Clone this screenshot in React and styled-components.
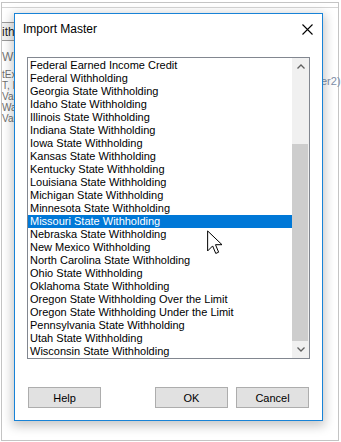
import React from "react"
import styled, { createGlobalStyle } from "styled-components"

const items = [
  "Federal Earned Income Credit",
  "Federal Withholding",
  "Georgia State Withholding",
  "Idaho State Withholding",
  "Illinois State Withholding",
  "Indiana State Withholding",
  "Iowa State Withholding",
  "Kansas State Withholding",
  "Kentucky State Withholding",
  "Louisiana State Withholding",
  "Michigan State Withholding",
  "Minnesota State Withholding",
  "Missouri State Withholding",
  "Nebraska State Withholding",
  "New Mexico Withholding",
  "North Carolina State Withholding",
  "Ohio State Withholding",
  "Oklahoma State Withholding",
  "Oregon State Withholding Over the Limit",
  "Oregon State Withholding Under the Limit",
  "Pennsylvania State Withholding",
  "Utah State Withholding",
  "Wisconsin State Withholding"
]

const selected = "Missouri State Withholding"

const Chevron = ({ down }) => (
  <svg width="8" height="5" viewBox="0 0 8 5">
    <polyline
      points={down ? "0.5,0.5 4,4 7.5,0.5" : "0.5,4.5 4,1 7.5,4.5"}
      fill="none"
      stroke="#606060"
      strokeWidth="1.3"
    />
  </svg>
)

class App extends React.Component {
  render() {
    return (
      <Backdrop>
        <GlobalStyle />
        <Frame>
          <TopStrip />
          <Body>
            <LeftCol>
              <FieldBox>
                <span>ith</span>
              </FieldBox>
              <Label>With</Label>
              <Lines>
                <div>tExt</div>
                <div>T, I</div>
                <div>Var.</div>
                <div>Wag</div>
                <div>Var.</div>
              </Lines>
            </LeftCol>
            <RightCol>er2)</RightCol>
          </Body>
        </Frame>

        <Dialog>
          <TitleBar>
            <Title>Import Master</Title>
            <CloseButton>
              <svg width="11" height="11" viewBox="0 0 11 11">
                <path d="M0.5 0.5 L10.5 10.5 M10.5 0.5 L0.5 10.5" stroke="#000" strokeWidth="1.1" />
              </svg>
            </CloseButton>
          </TitleBar>
          <Content>
            <ListBox>
              <Items>
                {items.map(item => (
                  <Item key={item} active={item === selected}>
                    {item}
                  </Item>
                ))}
              </Items>
              <ScrollBar>
                <ArrowButton>
                  <Chevron />
                </ArrowButton>
                <Track>
                  <Thumb />
                </Track>
                <ArrowButton>
                  <Chevron down />
                </ArrowButton>
              </ScrollBar>
            </ListBox>
          </Content>
          <ButtonRow>
            <Button>Help</Button>
            <Spacer />
            <Button>OK</Button>
            <Button>Cancel</Button>
          </ButtonRow>
        </Dialog>

        <Cursor width="15" height="25" viewBox="0 0 12 19.5">
          <path
            d="M0.5 0.5 L0.5 16.5 L4.5 12.5 L7 18.5 L9.3 17.5 L6.8 11.5 L12 11.5 Z"
            fill="#fff"
            stroke="#000"
            strokeWidth="0.8"
            strokeLinejoin="miter"
          />
        </Cursor>
      </Backdrop>
    )
  }
}

export default App

const GlobalStyle = createGlobalStyle`
  body {
    margin: 0;
    background: #fff;
    font-family: "Liberation Sans", Arial, sans-serif;
  }
`
const Backdrop = styled.div`
  position: relative;
  width: 341px;
  height: 442px;
  overflow: hidden;
  background: #fff;
`
const Frame = styled.div`
  box-sizing: border-box;
  margin: 2px 0 0 1px;
  width: 338px;
  height: 439px;
  border: 1px solid #c4c4c4;
  display: flex;
  flex-direction: column;
`
const TopStrip = styled.div`
  height: 4px;
  border-bottom: 1px solid #d4d4d4;
`
const Body = styled.div`
  flex: 1;
  display: flex;
  justify-content: space-between;
  font-size: 11px;
  color: #6f6f6f;
`
const LeftCol = styled.div`
  width: 60px;
  padding-top: 14px;
  display: flex;
  flex-direction: column;
`
const FieldBox = styled.div`
  height: 17px;
  border-top: 1px solid #9a9a9a;
  border-bottom: 1px solid #9a9a9a;
  background: #f2f2f2;
  display: flex;
  align-items: center;
  font-size: 12px;
  color: #222;
`
const Label = styled.div`
  margin-top: 10px;
  height: 13px;
  line-height: 13px;
  font-size: 12px;
  color: #777;
`
const Lines = styled.div`
  margin-top: 5px;
  font-size: 10px;
  & div {
    height: 11px;
    line-height: 11px;
  }
`
const RightCol = styled.div`
  width: 17px;
  padding-top: 67px;
  font-size: 11px;
  color: #8090a8;
  white-space: nowrap;
`
const Dialog = styled.div`
  position: absolute;
  left: 14px;
  top: 13px;
  box-sizing: border-box;
  width: 309px;
  height: 408px;
  background: #fff;
  border: 1px solid #1883d7;
  box-shadow: 0 3px 10px 2px rgba(0, 0, 0, 0.22);
  display: flex;
  flex-direction: column;
`
const TitleBar = styled.div`
  height: 30px;
  display: flex;
  align-items: center;
  justify-content: space-between;
  padding-left: 8px;
`
const Title = styled.span`
  font-size: 12px;
  color: #000;
`
const CloseButton = styled.div`
  width: 29px;
  height: 30px;
  display: flex;
  align-items: center;
  justify-content: center;
`
const Content = styled.div`
  padding: 13px 0 0 12px;
`
const ListBox = styled.div`
  box-sizing: border-box;
  width: 283px;
  height: 302px;
  border: 1px solid #828790;
  display: flex;
`
const Items = styled.div`
  flex: 1;
  overflow: hidden;
  padding-top: 1px;
  font-size: 11px;
`
const Item = styled.div`
  height: 13px;
  line-height: 13px;
  padding-left: 2px;
  white-space: nowrap;
  background: ${p => (p.active ? "#0078d7" : "transparent")};
  color: ${p => (p.active ? "#fff" : "#000")};
`
const ScrollBar = styled.div`
  width: 17px;
  background: #f0f0f0;
  display: flex;
  flex-direction: column;
`
const ArrowButton = styled.div`
  height: 17px;
  display: flex;
  align-items: center;
  justify-content: center;
`
const Track = styled.div`
  flex: 1;
  display: flex;
  flex-direction: column;
  justify-content: flex-end;
`
const Thumb = styled.div`
  height: 197px;
  margin-right: 1px;
  background: #cdcdcd;
`
const ButtonRow = styled.div`
  margin-top: 28px;
  padding: 0 13px;
  display: flex;
  gap: 8px;
`
const Spacer = styled.div`
  flex: 1;
`
const Button = styled.div`
  box-sizing: border-box;
  width: 73px;
  height: 21px;
  background: #e1e1e1;
  border: 1px solid #adadad;
  font-size: 11px;
  color: #000;
  display: flex;
  align-items: center;
  justify-content: center;
`
const Cursor = styled.svg`
  position: absolute;
  left: 207px;
  top: 230px;
`
